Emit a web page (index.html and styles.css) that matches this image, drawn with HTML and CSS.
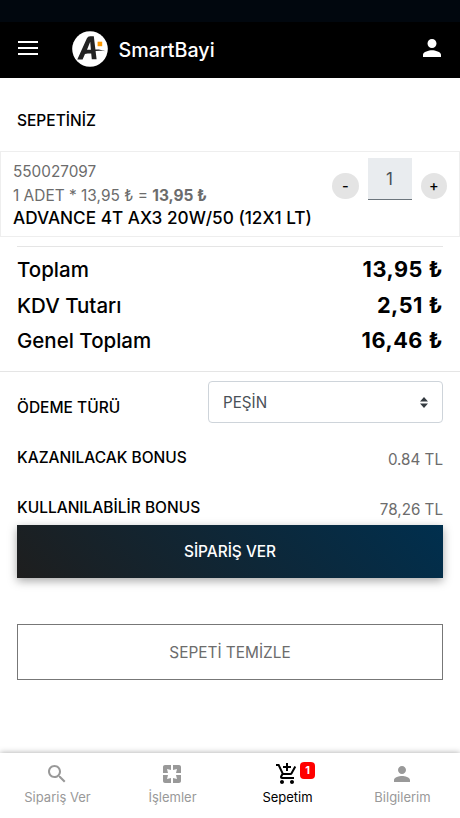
FILE: index.html
```html
<!DOCTYPE html>
<html lang="tr">
<head>
    <meta charset="UTF-8">
    <meta name="viewport" content="width=device-width, initial-scale=1.0">
    <title>SmartBayi - Sepetim</title>
    <link rel="stylesheet" href="styles.css">
</head>
<body>

    <!-- Header -->
    <div class="status-bar"></div>
    <header class="header">
        <svg class="menu-icon" viewBox="0 0 20 14">
            <path d="M0 1h20M0 7h20M0 13h20" stroke="#fff" stroke-width="1.8"/>
        </svg>
        <svg class="logo" viewBox="0 0 36 36">
            <circle cx="18" cy="18" r="17.8" fill="#fff"/>
            <path d="M5.300 28.500 14.800 7.600Q15.800 5.200 18.200 5.200H21.800L24.600 28.300H19.800L19.200 22.600H13.200L10.600 28.500zM15 18.800H18.900L18.200 10.800z" fill="#222"/>
            <path d="M11 22.300C17.500 18.600 25.500 17.300 33.600 20.200 26 19 19 20.200 13 23z" fill="#222"/>
            <rect x="25.600" y="10.700" width="4.600" height="4.500" fill="#f90"/>
        </svg>
        <span class="brand">SmartBayi</span>
        <svg class="user-icon" viewBox="4 4 16 16">
            <path d="M12 12c2.210 0 4-1.790 4-4s-1.790-4-4-4-4 1.790-4 4 1.790 4 4 4zm0 2c-2.670 0-8 1.340-8 4v2h16v-2c0-2.660-5.330-4-8-4z" fill="#fff"/>
        </svg>
    </header>

    <!-- Cart -->
    <main class="content">
        <h1 class="title">SEPETİNİZ</h1>

        <div class="cart-item">
            <div class="item-info">
                <div class="item-code">550027097</div>
                <div class="item-price">1 ADET * 13,95 ₺ = <b>13,95 ₺</b></div>
                <div class="item-name">ADVANCE 4T AX3 20W/50 (12X1 LT)</div>
            </div>
            <div class="quantity">
                <button class="qty-button">-</button>
                <input class="qty-input" type="text" value="1">
                <button class="qty-button">+</button>
            </div>
        </div>

        <div class="totals">
            <div class="total-row"><span class="total-label">Toplam</span><b class="total-value">13,95 ₺</b></div>
            <div class="total-row"><span class="total-label">KDV Tutarı</span><b class="total-value">2,51 ₺</b></div>
            <div class="total-row"><span class="total-label">Genel Toplam</span><b class="total-value">16,46 ₺</b></div>
        </div>

        <div class="payment">
            <div class="payment-row">
                <span class="payment-label label-type">ÖDEME TÜRÜ</span>
                <div class="select">
                    <span class="select-text">PEŞİN</span>
                    <svg class="select-arrows" viewBox="0 0 8 11">
                        <path d="M0 4.500 4 0l4 4.500zM0 6.500h8l-4 4.500z" fill="#343a40"/>
                    </svg>
                </div>
            </div>
            <div class="bonus-row">
                <span class="payment-label">KAZANILACAK BONUS</span>
                <span class="bonus-value">0.84 TL</span>
            </div>
            <div class="bonus-row">
                <span class="payment-label">KULLANILABİLİR BONUS</span>
                <span class="bonus-value">78,26 TL</span>
            </div>
            <button class="order-button">SİPARİŞ VER</button>
            <button class="clear-button">SEPETİ TEMİZLE</button>
        </div>
    </main>

    <!-- Bottom tabs -->
    <nav class="tabs">
        <a class="tab">
            <svg class="tab-icon" viewBox="0 0 24 24"><path d="M15.500 14h-.79l-.28-.27C15.410 12.590 16 11.110 16 9.500 16 5.910 13.090 3 9.500 3S3 5.910 3 9.500 5.910 16 9.500 16c1.610 0 3.090-.59 4.230-1.570l.27.28v.79l5 4.990L20.490 19l-4.990-5zm-6 0C7.010 14 5 11.990 5 9.500S7.010 5 9.500 5 14 7.010 14 9.500 11.990 14 9.500 14z"/></svg>
            <span class="tab-text">Sipariş Ver</span>
        </a>
        <a class="tab">
            <svg class="tab-icon" viewBox="0 0 24 24"><path d="M3 5v6h5L7 7l4 1V3H5c-1.100 0-2 .9-2 2zm5 8H3v6c0 1.100.9 2 2 2h6v-5l-4 1 1-4zm9 4-4-1v5h6c1.100 0 2-.9 2-2v-6h-5l1 4zm2-14h-6v5l4-1-1 4h5V5c0-1.100-.9-2-2-2z"/></svg>
            <span class="tab-text">İşlemler</span>
        </a>
        <a class="tab active">
            <svg class="tab-icon" viewBox="0 0 24 24"><path d="M11 9h2V6h3V4h-3V1h-2v3H8v2h3v3zm-4 9c-1.100 0-1.990.9-1.990 2S5.900 22 7 22s2-.9 2-2-.9-2-2-2zm10 0c-1.100 0-1.990.9-1.990 2s.89 2 1.990 2 2-.9 2-2-.9-2-2-2zm-9.830-3.250.03-.12.9-1.630h7.450c.75 0 1.410-.41 1.750-1.030l3.860-7.010L19.420 4h-.01l-1.100 2-2.760 5H8.530l-.13-.27L6.160 6l-.95-2-.94-2H1v2h2l3.600 7.590-1.350 2.450c-.16.28-.25.61-.25.960 0 1.100.9 2 2 2h12v-2H7.420c-.13 0-.25-.11-.25-.25z"/></svg>
            <span class="badge">1</span>
            <span class="tab-text">Sepetim</span>
        </a>
        <a class="tab">
            <svg class="tab-icon" viewBox="0 0 24 24"><path d="M12 12c2.210 0 4-1.790 4-4s-1.790-4-4-4-4 1.790-4 4 1.790 4 4 4zm0 2c-2.670 0-8 1.340-8 4v2h16v-2c0-2.660-5.330-4-8-4z"/></svg>
            <span class="tab-text">Bilgilerim</span>
        </a>
    </nav>

</body>
</html>
```

FILE: styles.css
```css
* {
    box-sizing: border-box;
}

body {
    margin: 0;
    height: 818px;
    display: flex;
    flex-direction: column;
    overflow: hidden;
    font-family: Inter, sans-serif;
    font-size: 15.4px;
    color: #000;
    background-color: #fff;
}

button, input {
    font-family: inherit;
    padding: 0;
    margin: 0;
    border-radius: 0;
}

/* Header */
.status-bar {
    height: 22px;
    background-color: #01070e;
}

.header {
    height: 56px;
    padding: 0 19px 3px 18px;
    display: flex;
    align-items: center;
    background-color: #000;
}

.menu-icon {
    width: 20px;
    height: 14px;
    margin-bottom: 1px;
}

.logo {
    width: 36px;
    height: 36px;
    margin-left: 34px;
}

.brand {
    margin-left: 10.5px;
    padding-top: 2px;
    font-size: 19.7px;
    font-weight: 500;
    color: #fff;
}

.user-icon {
    width: 18px;
    height: 18px;
    margin-left: auto;
    margin-bottom: 2px;
}

/* Cart */
.content {
    flex: 1;
}

.title {
    margin: 32px 17px 19px;
    font-size: 15.5px;
    line-height: 22px;
    font-weight: 500;
}

.cart-item {
    height: 86px;
    padding: 8px 12px 0;
    display: flex;
    border: 1px solid #eee;
}

.item-info {
    flex: 1;
    white-space: nowrap;
    color: #6c6c6c;
}

.item-code, .item-price, .item-name {
    height: 23px;
    line-height: 23px;
}

.item-code {
    font-size: 15.3px;
}

.item-price {
    line-height: 25px;
    font-size: 15.45px;
}

.item-name {
    font-size: 17.2px;
    font-weight: 500;
    color: #000;
}

.quantity {
    display: flex;
    gap: 9px;
    margin-top: -2px;
}

.qty-button {
    width: 26.5px;
    height: 26.5px;
    margin-top: 14.5px;
    border: none;
    border-radius: 50%;
    background-color: #e4e4e4;
    color: #000;
    font-size: 14.5px;
    font-weight: 500;
}

.qty-input {
    width: 44px;
    height: 42px;
    border: none;
    border-bottom: 1px solid #6c757d;
    background-color: #e9ecef;
    color: #495057;
    font-size: 17px;
    text-align: center;
}

.totals {
    margin: 9px 17px 0;
    padding: 5px 1px 0 0;
    height: 125px;
    border-top: 1px solid #e5e5e5;
}

.total-row {
    display: flex;
    justify-content: space-between;
    font-size: 20.5px;
    line-height: 35.5px;
}

.total-label {
    font-weight: 450;
}

.total-value {
    font-size: 21.7px;
    font-weight: 650;
    letter-spacing: 0.5px;
    margin-right: -1px;
}

.payment {
    padding: 9px 17px 0;
    border-top: 1px solid #e5e5e5;
}

.payment-row, .bonus-row {
    display: flex;
    justify-content: space-between;
}

.payment-label {
    font-weight: 500;
    font-size: 15.5px;
    line-height: 22px;
}

.label-type {
    margin-top: 16px;
}

.select {
    width: 235px;
    height: 42px;
    padding: 0 14px;
    display: flex;
    align-items: center;
    justify-content: space-between;
    border: 1px solid #ced4da;
    border-radius: 4px;
    font-size: 15.2px;
    color: #495057;
}

.select-arrows {
    width: 8px;
    height: 11px;
}

.bonus-row {
    height: 20px;
    margin-top: 24px;
}

.bonus-row + .bonus-row {
    margin-top: 30px;
}

.bonus-value {
    margin-top: 2px;
    font-size: 15.2px;
    line-height: 22px;
    color: #6c6c6c;
}

.order-button, .clear-button {
    display: block;
    width: 100%;
    font-size: 15.4px;
}

.order-button {
    height: 53px;
    margin-top: 8px;
    border: none;
    background: linear-gradient(45deg, #1e1e1e, #002f4e);
    box-shadow: 0 3px 9px rgba(0, 0, 0, 0.35);
    color: #fff;
    font-weight: 500;
}

.clear-button {
    height: 56px;
    margin-top: 46px;
    border: 1px solid #777;
    background-color: #fff;
    color: #6c6c6c;
}

/* Bottom tabs */
.tabs {
    height: 65px;
    display: flex;
    background-color: #fff;
    box-shadow: 0 0 6px rgba(0, 0, 0, 0.35);
}

.tab {
    position: relative;
    flex: 1;
    padding-top: 9px;
    display: flex;
    flex-direction: column;
    align-items: center;
    font-size: 13px;
    color: #999;
}

.tab-icon {
    width: 24px;
    height: 24px;
    margin-right: 1px;
    fill: currentColor;
}

.tab-text {
    margin-top: 3px;
    line-height: 16px;
}

.active {
    color: #000;
}

.badge {
    position: absolute;
    top: 9px;
    left: 70px;
    width: 15px;
    height: 17px;
    border-radius: 4px;
    background-color: #f00;
    color: #fff;
    font-size: 11px;
    font-weight: 700;
    line-height: 17px;
    text-align: center;
}
```
